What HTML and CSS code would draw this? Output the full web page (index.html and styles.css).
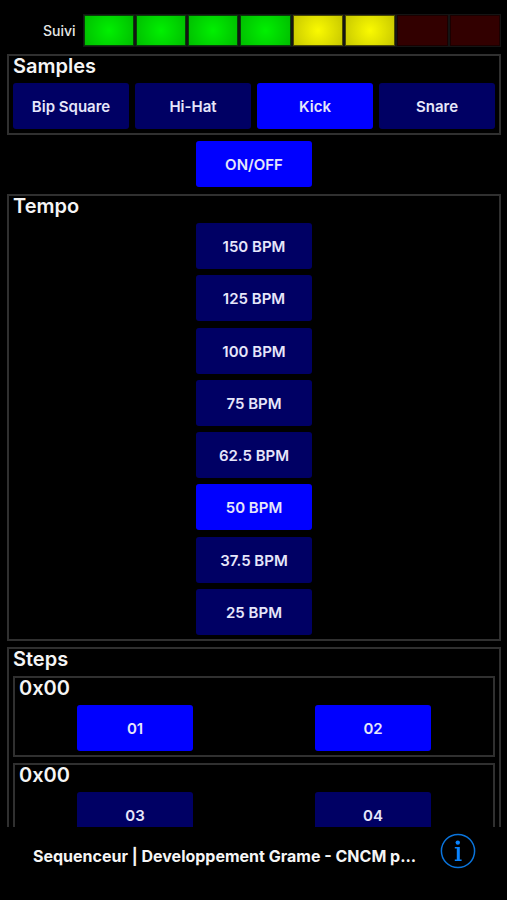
FILE: index.html
```html
<!DOCTYPE html>
<html lang="fr">
<head>
<meta charset="utf-8">
<meta name="viewport" content="width=device-width, initial-scale=1">
<title>Sequenceur</title>
<link rel="stylesheet" href="styles.css">
</head>
<body>
<main class="controls">
  <div class="meter">
    <span class="meter-label" id="meter-label">Suivi</span>
    <div class="meter-cells" role="img" aria-labelledby="meter-label">
      <span class="cell green"></span>
      <span class="cell green"></span>
      <span class="cell green"></span>
      <span class="cell green"></span>
      <span class="cell yellow"></span>
      <span class="cell yellow"></span>
      <span class="cell off"></span>
      <span class="cell off"></span>
    </div>
  </div>

  <section class="group">
    <h2 class="title">Samples</h2>
    <div class="samples">
      <button class="pad" type="button" aria-pressed="false">Bip Square</button>
      <button class="pad" type="button" aria-pressed="false">Hi-Hat</button>
      <button class="pad" type="button" aria-pressed="true">Kick</button>
      <button class="pad" type="button" aria-pressed="false">Snare</button>
    </div>
  </section>

  <div class="power">
    <button class="pad" type="button" aria-pressed="true">ON/OFF</button>
  </div>

  <section class="group">
    <h2 class="title">Tempo</h2>
    <div class="tempos">
      <button class="pad" type="button" aria-pressed="false">150 BPM</button>
      <button class="pad" type="button" aria-pressed="false">125 BPM</button>
      <button class="pad" type="button" aria-pressed="false">100 BPM</button>
      <button class="pad" type="button" aria-pressed="false">75 BPM</button>
      <button class="pad" type="button" aria-pressed="false">62.5 BPM</button>
      <button class="pad" type="button" aria-pressed="true">50 BPM</button>
      <button class="pad" type="button" aria-pressed="false">37.5 BPM</button>
      <button class="pad" type="button" aria-pressed="false">25 BPM</button>
    </div>
  </section>

  <section class="group">
    <h2 class="title">Steps</h2>
    <div class="step-list">
      <section class="group">
        <h3 class="title">0x00</h3>
        <div class="steps">
          <button class="pad" type="button" aria-pressed="true">01</button>
          <button class="pad" type="button" aria-pressed="true">02</button>
        </div>
      </section>
      <section class="group">
        <h3 class="title">0x00</h3>
        <div class="steps">
          <button class="pad" type="button" aria-pressed="false">03</button>
          <button class="pad" type="button" aria-pressed="false">04</button>
        </div>
      </section>
    </div>
  </section>
</main>

<footer class="bar">
  <p class="bar-title">Sequenceur | Developpement Grame - CNCM p...</p>
  <button class="info" type="button" aria-label="Info">
    <svg width="36" height="36" viewBox="0 0 36 36" fill="none" aria-hidden="true">
      <circle cx="18" cy="18" r="16.6" stroke="#0a74dc" stroke-width="1.5"/>
      <circle cx="17.8" cy="9.6" r="2.2" fill="#0a84ff"/>
      <path d="M14.8 14h5v12.4h1.8v1.5h-6.8v-1.5h2V15.5h-2z" fill="#0a84ff"/>
    </svg>
  </button>
</footer>
</body>
</html>
```
FILE: styles.css
```css
* {
  box-sizing: border-box;
}

body {
  margin: 0;
  height: 100vh;
  display: flex;
  flex-direction: column;
  background: #000;
  color: #f5f5f5;
  font-family: Inter, "Liberation Sans", sans-serif;
}

.controls {
  flex: 1;
  min-height: 0;
  overflow: hidden;
  padding: 14px 6px 0 7px;
  display: flex;
  flex-direction: column;
  gap: 6px;
}

.controls > * {
  flex-shrink: 0;
}

.meter {
  display: flex;
  align-items: center;
  gap: 7px;
  padding: 0 0 1px 36px;
}

.meter-label {
  font-size: 14px;
  font-weight: 500;
  color: #e6e6e6;
}

.meter-cells {
  flex: 1;
  height: 33px;
  display: flex;
  gap: 2px;
  padding: 1px;
  background: #141414;
}

.cell {
  flex: 1;
  border: 1px solid #1a0000;
}

.green {
  border-color: #064006;
  background: radial-gradient(circle, #00f000, #00be00);
}

.yellow {
  border-color: #4a4a00;
  background: radial-gradient(circle, #fafa00, #c8c800);
}

.off {
  background: #320000;
}

.group {
  border: 2px solid #303030;
  padding: 0 4px 4px;
}

.title {
  margin: 0;
  height: 27px;
  font-size: 20px;
  line-height: 21px;
  font-weight: 600;
}

.samples {
  display: grid;
  grid-template-columns: repeat(4, 1fr);
  gap: 6px;
}

.pad {
  min-width: 116px;
  height: 46px;
  padding: 1px 0 0;
  border: 0;
  border-radius: 3px;
  background: #000064;
  color: #e6e6fa;
  font: 600 15px/19px Inter, "Liberation Sans", sans-serif;
}

.pad[aria-pressed="true"] {
  background: #00f;
}

.power {
  display: flex;
  justify-content: center;
  padding-bottom: 1px;
}

.tempos {
  min-height: 412px;
  display: flex;
  flex-direction: column;
  align-items: center;
  justify-content: space-between;
}

.step-list {
  display: grid;
  gap: 6px;
}

.steps {
  display: grid;
  grid-template-columns: 1fr 1fr;
  gap: 6px;
  justify-items: center;
}

.bar {
  height: 73px;
  padding: 0 31px 0 33px;
  display: flex;
  align-items: flex-start;
  justify-content: space-between;
}

.bar-title {
  margin: 0;
  padding-top: 19px;
  font-size: 16px;
  line-height: 20px;
  font-weight: 700;
  white-space: nowrap;
}

.info {
  display: flex;
  margin-top: 6px;
  padding: 0;
  border: 0;
  background: none;
}
```
